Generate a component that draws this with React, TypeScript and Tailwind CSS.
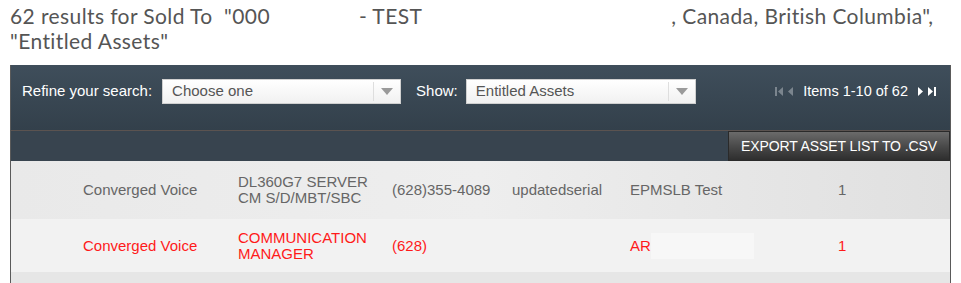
import React from 'react';

const rows = [
  {
    red: false,
    group: 'Converged Voice',
    product: ['DL360G7 SERVER', 'CM S/D/MBT/SBC'],
    phone: '(628)355-4089',
    serial: 'updatedserial',
    site: 'EPMSLB Test',
    qty: '1',
  },
  {
    red: true,
    group: 'Converged Voice',
    product: ['COMMUNICATION', 'MANAGER'],
    phone: '(628)',
    serial: '',
    site: 'AR',
    qty: '1',
  },
];

function Select({ value, width }: { value: string; width: string }) {
  return (
    <div
      className={`${width} h-[25px] flex items-center bg-gradient-to-b from-[#ffffff] to-[#f1f1f1] border border-[#d0d0d0] text-[15px] text-[#555]`}
    >
      <span className="flex-1 pl-[9px]">{value}</span>
      <span className="h-[19px] w-px bg-[#dedede]" />
      <span className="w-[26px] flex justify-center">
        <svg width="12" height="7" viewBox="0 0 12 7">
          <path d="M0 0 L12 0 L6 7 Z" fill="#9a9a9a" />
        </svg>
      </span>
    </div>
  );
}

function PagerIcon({ kind, color }: { kind: 'first' | 'prev' | 'next' | 'last'; color: string }) {
  return (
    <svg width="8" height="9" viewBox="0 0 8 9">
      {kind === 'first' && (
        <>
          <rect x="0" y="0" width="2" height="9" fill={color} />
          <path d="M8 0 L8 9 L3 4.5 Z" fill={color} />
        </>
      )}
      {kind === 'prev' && <path d="M6 0 L6 9 L1 4.5 Z" fill={color} />}
      {kind === 'next' && <path d="M2 0 L2 9 L7 4.5 Z" fill={color} />}
      {kind === 'last' && (
        <>
          <path d="M0 0 L0 9 L5 4.5 Z" fill={color} />
          <rect x="6" y="0" width="2" height="9" fill={color} />
        </>
      )}
    </svg>
  );
}

export default function App() {
  return (
    <div className="w-[961px] h-[283px] overflow-hidden bg-white">
      {/* Heading */}
      <h1 className="pl-[10px] pt-[3px] text-[21px] leading-[25px] tracking-[0.4px] text-[#555] font-['Lato',sans-serif] font-normal whitespace-nowrap">
        62 results for Sold To &nbsp;"000<span className="inline-block w-[89px]" />- TEST
        <span className="inline-block w-[249px]" />, Canada, British Columbia",
        <br />
        "Entitled Assets"
      </h1>

      {/* Results panel */}
      <div className="mt-[12px] ml-[10px] w-[941px] border-x border-[#5a5a5a] font-['Liberation_Sans',Arial,sans-serif]">
        {/* Toolbar */}
        <div className="h-[66px] pt-[14px] px-[11px] bg-gradient-to-b from-[#3f4e5b] to-[#33404b] border-b border-[#5b5350] flex items-start">
          <div className="flex items-center h-[25px] gap-[10px]">
            <span className="text-white text-[15px]">Refine your search:</span>
            <Select value="Choose one" width="w-[239px]" />
          </div>
          <div className="flex items-center h-[25px] gap-[8px] ml-[15px]">
            <span className="text-white text-[15px]">Show:</span>
            <Select value="Entitled Assets" width="w-[230px]" />
          </div>
          <div className="ml-auto flex items-center h-[25px] gap-[4px] pr-[3px]">
            <PagerIcon kind="first" color="#7b858e" />
            <PagerIcon kind="prev" color="#7b858e" />
            <span className="text-white text-[14.5px] mx-[4px]">Items 1-10 of 62</span>
            <PagerIcon kind="next" color="#ffffff" />
            <PagerIcon kind="last" color="#ffffff" />
          </div>
        </div>

        {/* Action bar */}
        <div className="h-[30px] bg-[#38444f] flex justify-end">
          <button className="h-[30px] w-[222px] bg-gradient-to-b from-[#6b6b6b] via-[#4a4a4a] to-[#2e2e2e] border border-[#2a2a2a] text-white text-[14px] tracking-[-0.1px]">
            EXPORT ASSET LIST TO .CSV
          </button>
        </div>

        {/* Rows */}
        {rows.map((r, i) => (
          <div
            key={i}
            className={`grid grid-cols-[155px_154px_120px_118px_208px_1fr] items-center pl-[72px] text-[15px] leading-[16px] ${
              i === 0
                ? 'h-[58px] bg-gradient-to-r from-[#e9e9e9] via-[#eeeeee] to-[#e0e0e0] text-[#666]'
                : 'h-[53px] bg-[#f2f2f2] text-[#ff1a1a]'
            }`}
          >
            <span>{r.group}</span>
            <span>
              {r.product[0]}
              <br />
              {r.product[1]}
            </span>
            <span>{r.phone}</span>
            <span>{r.serial}</span>
            <span className="flex items-center">
              {r.site}
              {r.red && <span className="inline-block w-[103px] h-[26px] bg-[#f7f7f7]" />}
            </span>
            <span>{r.qty}</span>
          </div>
        ))}
        <div className="h-[20px] bg-[#e6e6e6]" />
      </div>
    </div>
  );
}
